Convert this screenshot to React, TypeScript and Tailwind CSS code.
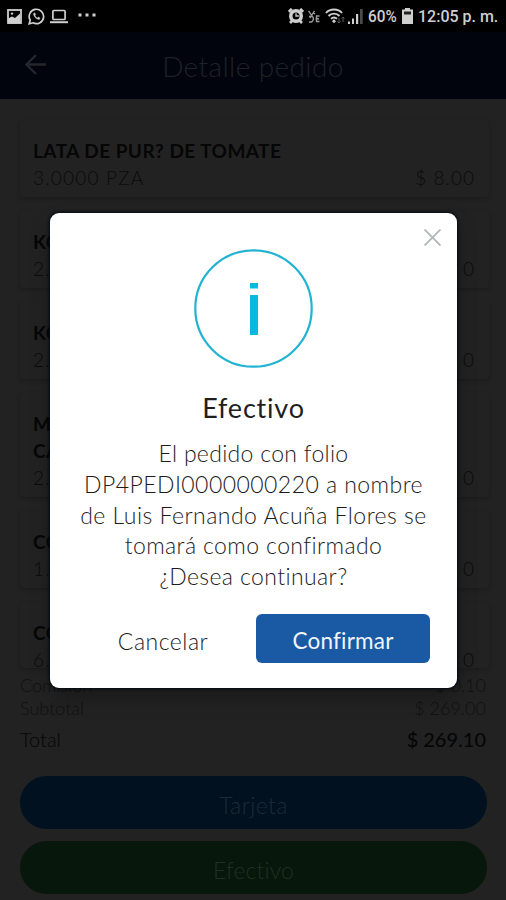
import { ReactNode } from "react";

type Item = { title: string[]; qty: string; price: string; box: string };

const items: Item[] = [
  { title: ["LATA DE PUR? DE TOMATE"], qty: "3.0000 PZA", price: "$ 8.00", box: "h-[77px] mb-[14px]" },
  { title: ["KO"], qty: "2.0", price: "0", box: "h-[77px] mb-[14px]" },
  { title: ["KO"], qty: "2.0", price: "0", box: "h-[77px] mb-[14px]" },
  { title: ["MA", "CA"], qty: "2.0", price: "0", box: "h-[104px] mb-[14px]" },
  { title: ["CO"], qty: "1.0", price: "0", box: "h-[77px] mb-[14px]" },
  { title: ["CO"], qty: "6.0", price: "0", box: "h-[66px]" },
];

function StatusBar() {
  return (
    <div className="flex h-8 shrink-0 items-center bg-black pl-[7px] pr-[8px] text-[#cfcfcf]">
      <svg className="h-[15px] w-[15px]" viewBox="0 0 15 15" fill="none">
        <rect x="1" y="1" width="13" height="13" stroke="currentColor" strokeWidth="1.8" />
        <path d="M1 9.500l4-2 3 1.500 5-4.500v10H1z" fill="currentColor" />
        <circle cx="5" cy="4.600" r="1.200" fill="currentColor" />
      </svg>
      <svg className="ml-[6px] h-[17px] w-[17px]" viewBox="0 0 17 17" fill="none" stroke="currentColor">
        <path d="M1.200 15.800l1-3.700A7.200 7.200 0 1 1 5 14.800z" strokeWidth="1.700" />
        <path d="M5.700 5.200c-.8 2.600 2.600 6.300 5.600 6.200l.8-1.300-1.900-1-.9.8C8.200 9.500 7.300 8.500 7 7.600l.7-.8-.8-1.900z" fill="currentColor" strokeWidth=".4" />
      </svg>
      <svg className="ml-[5px] h-[15px] w-[18px]" viewBox="0 0 18 15" fill="none" stroke="currentColor">
        <rect x="2.900" y="1.500" width="12.200" height="9" rx="1" strokeWidth="1.700" />
        <path d="M0 13.200h18" strokeWidth="2" />
      </svg>
      <svg className="mb-[2px] ml-[10px] h-[4px] w-[18px]" viewBox="0 0 18 4" fill="currentColor">
        <rect x="0.500" y="0.500" width="3" height="3" />
        <rect x="7.500" y="0.500" width="3" height="3" />
        <rect x="14.500" y="0.500" width="3" height="3" />
      </svg>
      <svg className="ml-auto h-[16px] w-[16px]" viewBox="0 0 16 16" fill="none">
        <path d="M.8 3.800l3-3M15.200 3.800l-3-3M2 15l2.500-2.500M14 15l-2.500-2.500" stroke="currentColor" strokeWidth="2.600" />
        <circle cx="8" cy="8" r="7" fill="currentColor" />
        <circle cx="8" cy="8" r="3.500" fill="#000" />
        <path d="M8 5.200V8h2.800" stroke="currentColor" strokeWidth="1.300" />
      </svg>
      <svg className="ml-[4px] h-[13px] w-[12px]" viewBox="0 0 12 13" fill="none" stroke="#9a9a9a" strokeWidth="1.400">
        <path d="M.5.800l3.500 5M6.500.800L2 8M1 6.500h3.500c1.500 1.500 1 4.500-1 5.500H1M5 2.500l2 1.500M11.500 6H8.500v5.500h3M7.500 8.700h3.500" />
      </svg>
      <svg className="ml-[5px] h-[16px] w-[21px]" viewBox="0 0 21 16" fill="none" stroke="currentColor" strokeWidth="1.900">
        <path d="M1 5c4-4.600 12-4.600 16 0M3.500 8c3-3.200 8-3.200 11 0M6 10.800c2-1.800 4-1.800 6 0" />
        <path d="M9 11.300l2 2L9 15.300l-2-2z" fill="currentColor" stroke="none" />
        <path d="M14 10v5M12.500 13.500l1.500 1.500 1.500-1.500M18 14V9M16.500 10.500L18 9l1.500 1.500" stroke="#5a5a5a" strokeWidth="1" />
      </svg>
      <svg className="ml-[2px] h-[15px] w-[15px]" viewBox="0 0 15 15">
        <path d="M0 12.500h2V15H0zM4 9.500h2V15H4zM8 5h2.200v10H8z" fill="#cfcfcf" />
        <path d="M12 0h2.700v15H12z" fill="#4b4b4b" />
      </svg>
      <span className="ml-[5px] w-[29px] origin-left scale-x-[0.9] whitespace-nowrap font-['Roboto'] text-[17px] font-medium leading-8">60%</span>
      <svg className="ml-[5px] h-[16px] w-[11px]" viewBox="0 0 11 16">
        <path d="M3 0h5v1.500h3V16H0V1.500h3z" fill="#cfcfcf" />
        <path d="M2 3.500h7V6.500H2z" fill="#222" />
      </svg>
      <span className="ml-[5px] w-[80px] origin-left scale-x-[0.94] whitespace-nowrap font-['Roboto'] text-[17px] font-medium leading-8">12:05 p. m.</span>
    </div>
  );
}

function Card({ item }: { item: Item }) {
  return (
    <div className={`shrink-0 rounded-sm bg-[#222222] pl-[13px] pr-[15px] pt-[17px] shadow-[0_2px_4px_rgba(0,0,0,0.2)] ${item.box}`}>
      {item.title.map((line) => (
        <div key={line} className="whitespace-nowrap text-[19px] font-bold leading-[27px] tracking-[0.460px] text-[#060606]">
          {line}
        </div>
      ))}
      <div className="flex justify-between text-[19px] font-light leading-[27px] text-[#0b0b0b]">
        <span className="tracking-[1.200px]">{item.qty}</span>
        <span className="-mr-px tracking-[1px]">{item.price}</span>
      </div>
    </div>
  );
}

function Summary({ label, value, className }: { label: string; value: string; className: string }) {
  return (
    <div className={`flex justify-between pr-px ${className}`}>
      <span>{label}</span>
      <span>{value}</span>
    </div>
  );
}

function Line({ className, children }: { className: string; children: ReactNode }) {
  return (
    <div>
      <span className={`whitespace-nowrap ${className}`}>{children}</span>
    </div>
  );
}

function Dialog() {
  return (
    <div className="absolute left-[50px] top-[213px] flex h-[475px] w-[407px] flex-col items-center rounded-[9px] bg-white text-center shadow-[0_0_3px_1px_#000a12,0_10px_20px_rgba(0,0,0,0.25)]">
      <svg className="absolute right-[16px] top-[16px] h-[17px] w-[17px]" viewBox="0 0 17 17" stroke="#b4b7ba" strokeWidth="1.900" fill="none">
        <path d="M.5.500l16 16M16.500.500l-16 16" />
      </svg>
      <svg className="mt-[36px] h-[119px] w-[119px] shrink-0" viewBox="0 0 119 119">
        <circle cx="59.500" cy="59.500" r="58.200" fill="none" stroke="#22b3d3" strokeWidth="2.200" />
        <path d="M56 34h8v5.500h-8zM56 46h8v40h-8z" fill="#06b9df" />
      </svg>
      <h2 className="mt-[23px] text-[27px] leading-[34px] tracking-[0.800px] text-[#1f1f1f]">Efectivo</h2>
      <div className="mt-[13px] text-[23px] font-light leading-[30.800px] text-[#1c1c1c]">
        <Line className="tracking-[0.300px]">El pedido con folio</Line>
        <Line className="tracking-[0.450px]">DP4PEDI0000000220 a nombre</Line>
        <Line className="tracking-[0.480px]">de Luis Fernando Acuña Flores se</Line>
        <Line className="tracking-[0.400px]">tomará como confirmado</Line>
        <Line className="tracking-[0.400px]">¿Desea continuar?</Line>
      </div>
      <div className="mt-[22px] flex w-full pl-[26px] pr-[27px]">
        <button className="h-[49px] w-[174px] pt-[5px] text-[23px] font-light tracking-[0.500px] text-[#1c1c1c]">Cancelar</button>
        <button className="ml-auto h-[49px] w-[174px] rounded-[6px] bg-[#1a59a4] pt-[5px] text-[22.500px] tracking-[0.200px] text-[#f0f5fa]">Confirmar</button>
      </div>
    </div>
  );
}

export default function App() {
  return (
    <div className="relative flex h-[900px] w-[506px] flex-col overflow-hidden bg-[#222222] font-['Lato',sans-serif]">
      <StatusBar />
      <header className="relative flex h-[67px] shrink-0 items-center justify-center bg-[#01040d] text-[28px] font-light leading-[40px] tracking-[0.400px] text-[#1e2227]">
        <svg className="absolute left-[25px] top-[22px] h-[21px] w-[21px]" viewBox="0 0 21 21" fill="none" stroke="#23272b" strokeWidth="2.300">
          <path d="M11 1L1.500 10.500 11 20M1.500 10.500H21" />
        </svg>
        Detalle pedido
      </header>
      <main className="flex h-[568px] shrink-0 flex-col px-[17px] pt-[21px]">
        <div className="flex flex-col pl-[3px]">
          {items.map((item, i) => (
            <Card key={i} item={item} />
          ))}
        </div>
      </main>
      <footer className="flex flex-1 flex-col pl-[20px] pr-[19px] pt-[7px]">
        <Summary label="Comisión" value="$ 0.10" className="text-[18px] font-light leading-[23px] text-[#111]" />
        <Summary label="Subtotal" value="$ 269.00" className="text-[18px] font-light leading-[22px] text-[#111]" />
        <div className="mt-[6px] flex justify-between pr-px text-[20px] leading-[28px] text-[#060606]">
          <span className="font-light">Total</span>
          <span className="font-medium">$ 269.10</span>
        </div>
        <button className="mt-[23px] h-[53px] shrink-0 rounded-full bg-[#01111f] pt-[5px] text-[23px] font-light tracking-[0.400px] text-[#1b2c38]">Tarjeta</button>
        <button className="mt-[12px] h-[53px] shrink-0 rounded-full bg-[#08170b] pt-[5px] text-[23px] font-light tracking-[0.100px] text-[#1f3022]">Efectivo</button>
      </footer>
      <Dialog />
    </div>
  );
}
